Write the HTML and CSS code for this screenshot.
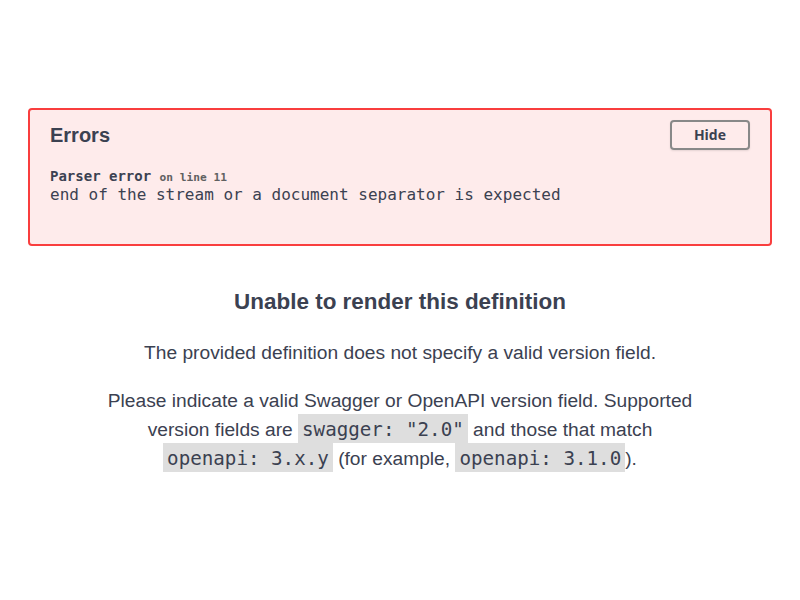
FILE: index.html
```html
<!DOCTYPE html>
<html>
<head>
<meta charset="utf-8">
<link rel="stylesheet" href="styles.css">
</head>
<body>
<div class="swagger-ui">
  <div class="errors-wrapper">
    <div class="errors-head">
      <h4 class="errors-title">Errors</h4>
      <button class="btn">Hide</button>
    </div>
    <div class="errors">
      <div class="error-wrapper">
        <h4 class="error-title">Parser error <small>on line 11</small></h4>
        <span class="message">end of the stream or a document separator is expected</span>
      </div>
    </div>
  </div>
  <div class="version-pragma">
    <div class="version-pragma__message">
      <div class="pragma-inner">
        <h3 class="pragma-title">Unable to render this definition</h3>
        <p class="pragma-text">The provided definition does not specify a valid version field.</p>
        <p class="pragma-text">Please indicate a valid Swagger or OpenAPI version field. Supported version fields are <code>swagger: "2.0"</code> and those that match <code>openapi: 3.x.y</code> (for example, <code>openapi: 3.1.0</code>).</p>
      </div>
    </div>
  </div>
</div>
</body>
</html>
```

FILE: styles.css
```css
html, body {
  margin: 0;
  padding: 0;
  background: #ffffff;
}
body {
  font-family: "Liberation Sans", Arial, sans-serif;
  color: #3b4151;
}
.swagger-ui {
  padding: 108px 28px 0;
}
.errors-wrapper {
  border: 2px solid #f93e3e;
  border-radius: 4px;
  background: #feebeb;
  padding: 10px 20px 40px;
}
.errors-head {
  display: flex;
  align-items: center;
}
.errors-title {
  flex: 1;
  margin: 0;
  font-size: 20px;
  font-weight: 700;
  color: #3b4151;
}
.btn {
  font-family: "Open Sans", sans-serif;
  font-size: 14px;
  font-weight: 700;
  line-height: 16px;
  padding: 5px 22px;
  border: 2px solid #888888;
  border-radius: 4px;
  background: transparent;
  color: #3b4151;
  box-shadow: 0 1px 2px rgba(0,0,0,0.1);
}
.errors {
  margin-top: 18px;
}
.error-title {
  margin: 0;
  font-family: "DejaVu Sans Mono", monospace;
  font-size: 14px;
  font-weight: 700;
  line-height: 17px;
  color: #3b4151;
}
.error-title small {
  font-size: 11.2px;
  color: #606060;
}
.message {
  display: block;
  font-family: "DejaVu Sans Mono", monospace;
  font-size: 16px;
  line-height: 18px;
  color: #3b4151;
}
.version-pragma {
  padding: 42px 0 0;
}
.version-pragma__message {
  display: flex;
  justify-content: center;
  font-size: 19.2px;
  line-height: 28.8px;
  text-align: center;
  padding: 0 12px;
}
.pragma-inner {
  max-width: 55ch;
  flex: 1;
}
.pragma-title {
  margin: 0 0 22.5px;
  font-size: 22.46px;
  font-weight: 700;
}
.pragma-text {
  margin: 0 0 19.2px;
}
code {
  font-family: "DejaVu Sans Mono", monospace;
  font-size: 19.2px;
  background-color: #dedede;
  padding: 4px 4px 2px;
  white-space: pre;
}
```
